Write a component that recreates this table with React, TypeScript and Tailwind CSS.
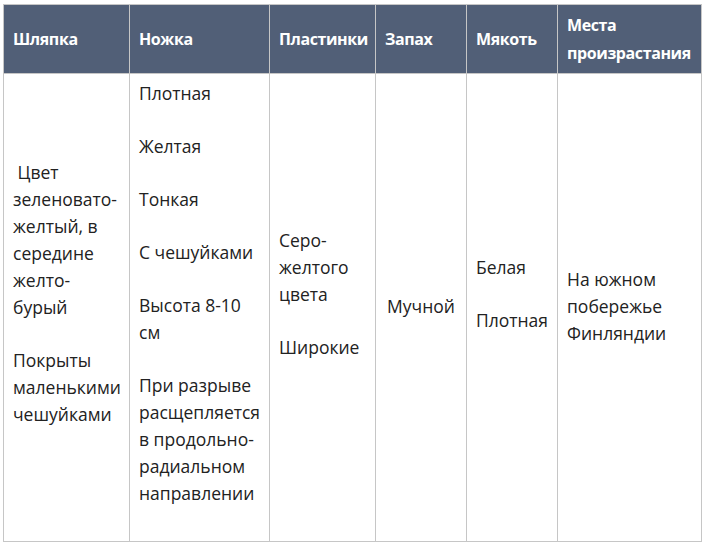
import React from "react";

const P = ({ children }: { children: React.ReactNode }) => (
  <p className="mb-[26px]">{children}</p>
);

export default function App() {
  const th =
    "border border-[#c6c6c6] bg-[#515f77] text-white font-bold text-[16px] tracking-[-0.4px] leading-[28px] text-left px-[9px] py-[6px] align-middle";
  const td =
    "border border-[#c6c6c6] px-[9px] pt-[6px] pb-[8px] align-middle text-[17.5px] leading-[27px] text-[#222]";
  return (
    <div className="bg-white w-[702px] h-[543px] pt-[4px] pl-[3px]" style={{ fontFamily: '"Open Sans", sans-serif' }}>
      <table className="border-collapse table-fixed w-[698px]">
        <colgroup>
          <col className="w-[126px]" />
          <col className="w-[140px]" />
          <col className="w-[106px]" />
          <col className="w-[91px]" />
          <col className="w-[91px]" />
          <col className="w-[144px]" />
        </colgroup>
        <thead>
          <tr className="h-[68px]">
            <th className={th}>Шляпка</th>
            <th className={th}>Ножка</th>
            <th className={th}>Пластинки</th>
            <th className={th}>Запах</th>
            <th className={th}>Мякоть</th>
            <th className={th}>Места произрастания</th>
          </tr>
        </thead>
        <tbody>
          <tr className="h-[467px]">
            <td className={td}>
              <P>{"\u00a0"}Цвет зеленовато-желтый, в середине желто-бурый</P>
              <P>Покрыты маленькими чешуйками</P>
            </td>
            <td className={td}>
              <P>Плотная</P>
              <P>Желтая</P>
              <P>Тонкая</P>
              <P>С чешуйками</P>
              <P>Высота 8-10 см</P>
              <P>При разрыве расщепляется в продольно-радиальном направлении</P>
            </td>
            <td className={td}>
              <P>Серо-желтого цвета</P>
              <P>Широкие</P>
            </td>
            <td className={`${td} text-center`}>Мучной</td>
            <td className={td}>
              <P>Белая</P>
              <P>Плотная</P>
            </td>
            <td className={td}>На южном побережье Финляндии</td>
          </tr>
        </tbody>
      </table>
    </div>
  );
}
